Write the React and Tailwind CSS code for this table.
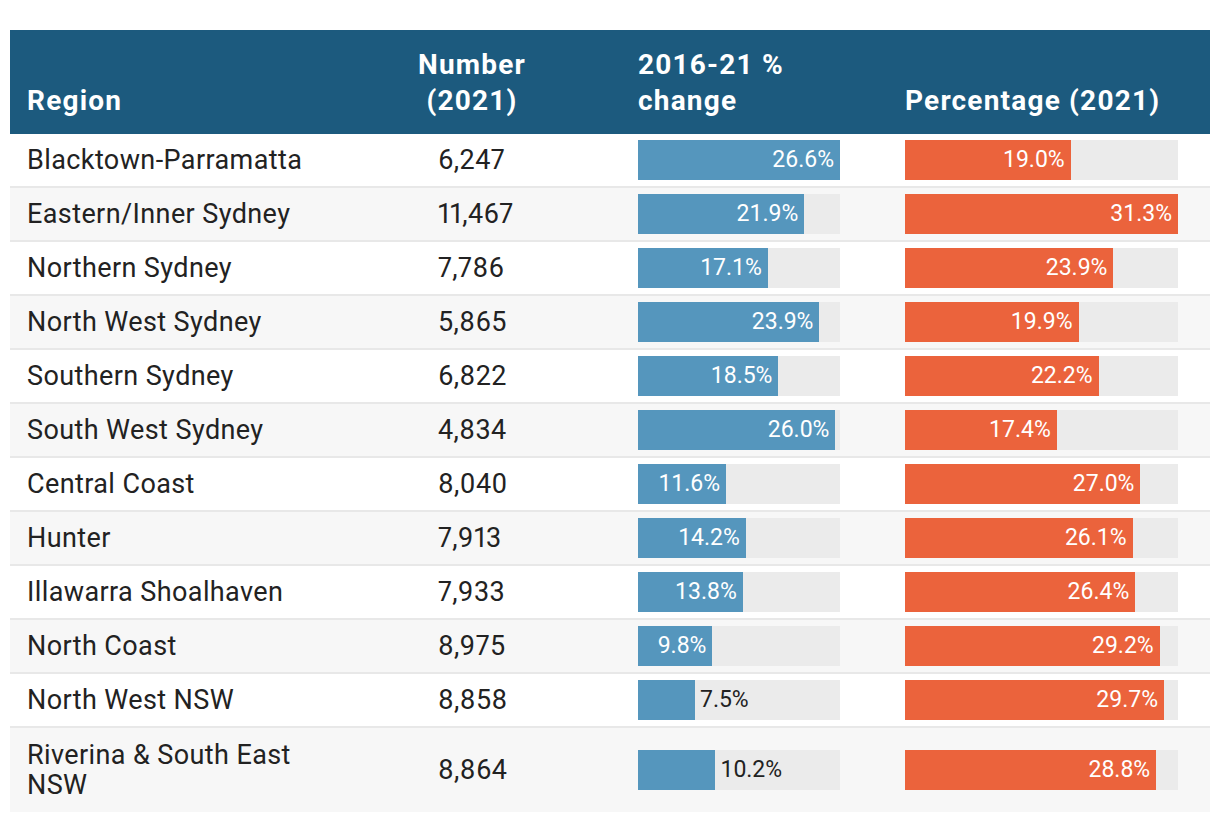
import React from 'react';

const rows = [
  { region: 'Blacktown-Parramatta', number: '6,247', change: 26.6, pct: 19.0 },
  { region: 'Eastern/Inner Sydney', number: '11,467', change: 21.9, pct: 31.3 },
  { region: 'Northern Sydney', number: '7,786', change: 17.1, pct: 23.9 },
  { region: 'North West Sydney', number: '5,865', change: 23.9, pct: 19.9 },
  { region: 'Southern Sydney', number: '6,822', change: 18.5, pct: 22.2 },
  { region: 'South West Sydney', number: '4,834', change: 26.0, pct: 17.4 },
  { region: 'Central Coast', number: '8,040', change: 11.6, pct: 27.0 },
  { region: 'Hunter', number: '7,913', change: 14.2, pct: 26.1 },
  { region: 'Illawarra Shoalhaven', number: '7,933', change: 13.8, pct: 26.4 },
  { region: 'North Coast', number: '8,975', change: 9.8, pct: 29.2 },
  { region: 'North West NSW', number: '8,858', change: 7.5, pct: 29.7 },
  { region: 'Riverina & South East NSW', number: '8,864', change: 10.2, pct: 28.8 },
];

const maxChange = 26.6;
const maxPct = 31.3;

// bar with label inside (white) or just outside (dark) when the fill is too short
const Bar = ({ value, max, width, color }) => {
  const fill = (value / max) * width;
  const label = `${value.toFixed(1)}%`;
  const inside = fill > label.length * 12.5 + 20;
  return (
    <div className="relative h-[40px] bg-[#ebebeb] flex" style={{ width }}>
      <div
        className={`h-full flex items-center justify-end ${color}`}
        style={{ width: fill }}
      >
        {inside && <span className="pr-[6px] text-white">{label}</span>}
      </div>
      {!inside && (
        <span className="flex items-center pl-[5px] text-[#222]">{label}</span>
      )}
    </div>
  );
};

const grid = 'grid grid-cols-[320px_284px_267px_329px]';

export default function App() {
  return (
    <div className="w-[1220px] h-[822px] bg-white pt-[30px] px-[10px] font-['Roboto',sans-serif]">
      <div className={`${grid} items-end bg-[#1c5a7e] text-white font-bold text-[28px] tracking-[1.2px] leading-[36px] pt-[17px] pb-[15px]`}>
        <div className="pl-[17px]">Region</div>
        <div className="text-center">Number<br />(2021)</div>
        <div className="pl-[24px]">2016-21 %<br />change</div>
        <div className="pl-[24px]">Percentage (2021)</div>
      </div>
      {rows.map((r, i) => (
        <div
          key={r.region}
          className={`${grid} items-center ${i % 2 ? 'bg-[#f7f7f7]' : 'bg-white'} ${i < rows.length - 1 ? 'border-b-2 border-[#e8e8e8] min-h-[54px]' : 'min-h-[84px]'} text-[#222]`}
        >
          <div className="pl-[17px] pr-[8px] text-[27px] tracking-[0.4px] leading-[30px]">{r.region}</div>
          <div className="pl-[108px] text-[27px] tracking-[0.4px] proportional-nums leading-[30px]">{r.number}</div>
          <div className="pl-[24px] text-[23px]">
            <Bar value={r.change} max={maxChange} width={202} color="bg-[#5596bd]" />
          </div>
          <div className="pl-[24px] text-[23px]">
            <Bar value={r.pct} max={maxPct} width={273} color="bg-[#eb633c]" />
          </div>
        </div>
      ))}
    </div>
  );
}
